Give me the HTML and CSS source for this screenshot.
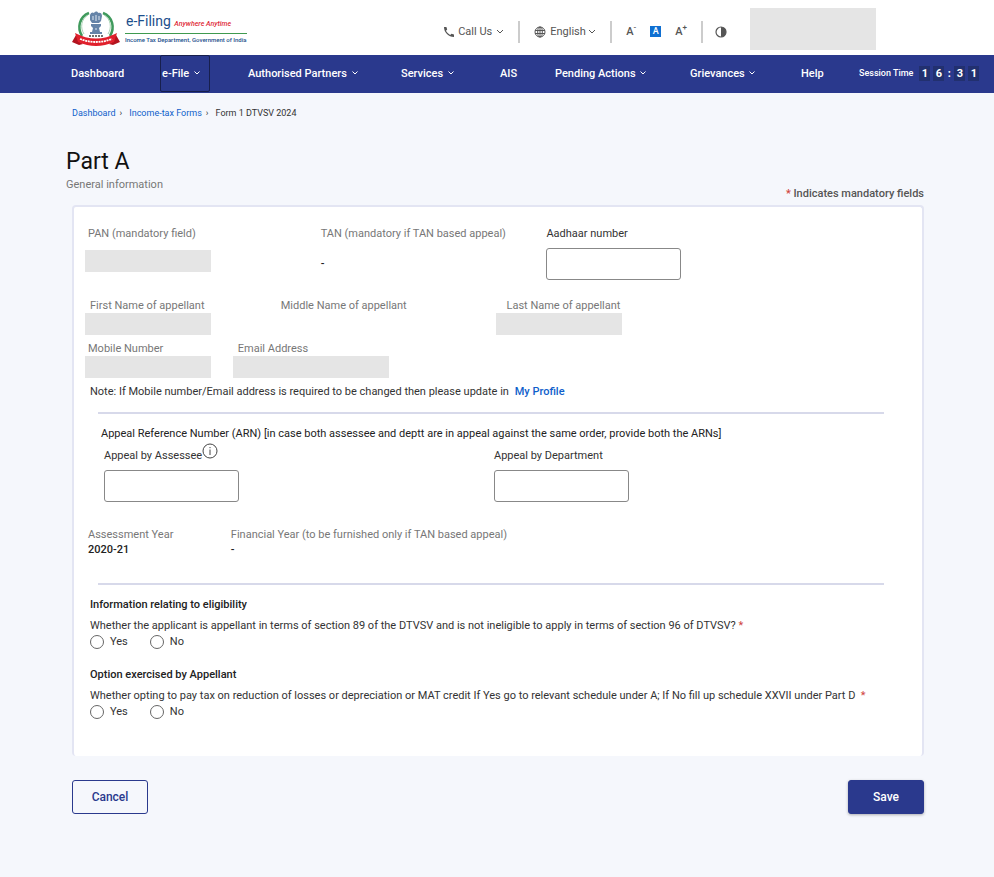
FILE: index.html
```html
<!DOCTYPE html>
<html lang="en">
<head>
    <meta charset="UTF-8">
    <meta name="viewport" content="width=device-width, initial-scale=1.0">
    <title>Form 1 DTVSV 2024 - Part A</title>
    <link rel="stylesheet" href="styles.css">
</head>
<body>
<header class="header">
    <a href="#" class="logo">
        <svg class="emblem" width="50" height="37" viewBox="0 0 50 37">
            <path d="M18 3C8 7 6 18 11 26" fill="none" stroke="#3f9a5c" stroke-width="2.500"/>
            <path d="M32 3c10 4 12 15 7 23" fill="none" stroke="#3f9a5c" stroke-width="2.500"/>
            <path d="M17 5C10 9 9 18 13 24M33 5c7 4 8 13 4 19" fill="none" stroke="#a9d3b4" stroke-width="1"/>
            <path d="M19 5c1-3 3-3 4-2 1-2 4-2 4 0 2-1 4 0 4 3l-1 5-2 2h-7l-2-3z" fill="#6684a8"/>
            <path d="M20 14h10v2l-2 2 1 4h2v2H19v-2h2l1-4-2-2z" fill="#6684a8"/>
            <path d="M22 6v4M25 5v6M28 6v4M24 19h2" stroke="#dfe8f2" stroke-width="1"/>
            <path d="M18 26h14" stroke="#444" stroke-width="1.500" stroke-dasharray="2 1"/>
            <path d="M1 32l4-7 5 1-1 6 3 2-4 1zM49 32l-4-7-5 1 1 6-3 2 4 1z" fill="#b3141f"/>
            <path d="M4 23q21 11 42 0l-3 9q-18 8-36 0z" fill="#e0202c"/>
            <path d="M9 29q16 6 32 0" fill="none" stroke="#fff" stroke-width="1.800" stroke-dasharray="2 .7"/>
        </svg>
        <span class="logo-text">
            <span class="logo-name">e-Filing <em>Anywhere Anytime</em></span>
            <span class="logo-dept">Income Tax Department, Government of India</span>
        </span>
    </a>
    <div class="header-right">
        <div class="tools">
            <button type="button" class="tool call">
                <svg width="12" height="12" viewBox="0 0 12 12"><path d="M1 1h2.400l.8 2.600-1.200 1.200c.8 1.700 2.300 3.200 4.200 4.200l1.200-1.200 2.600.8V11C5.500 11 1 6.500 1 1z" fill="#555"/></svg>
                Call Us
                <svg class="chevron" width="8" height="5" viewBox="0 0 8 5"><path d="M1 1l3 3 3-3"/></svg>
            </button>
            <span class="divider"></span>
            <label class="tool language">
                <svg width="12" height="12" viewBox="0 0 12 12" fill="none" stroke="#555" stroke-width="1"><circle cx="6" cy="6" r="5"/><ellipse cx="6" cy="6" rx="2.300" ry="5"/><path d="M1 4.500h10M1 7.500h10M6 1v10"/></svg>
                <select aria-label="Language">
                    <option>English</option>
                </select>
                <svg class="chevron" width="8" height="5" viewBox="0 0 8 5"><path d="M1 1l3 3 3-3"/></svg>
            </label>
            <span class="divider"></span>
            <div class="font-size">
                <button type="button" class="tool">A<sup>-</sup></button>
                <button type="button" class="tool active">A</button>
                <button type="button" class="tool">A<sup>+</sup></button>
            </div>
            <span class="divider"></span>
            <button type="button" class="tool contrast" aria-label="Contrast">
                <svg width="12" height="12" viewBox="0 0 12 12"><circle cx="6" cy="6" r="5" fill="#fff" stroke="#555" stroke-width="1.200"/><path d="M6 1a5 5 0 0 1 0 10z" fill="#555"/></svg>
            </button>
        </div>
        <div class="profile"></div>
    </div>
</header>

<nav class="nav">
    <a href="#">Dashboard</a>
    <a href="#" class="selected">e-File <svg class="chevron" width="6" height="4" viewBox="0 0 6 4"><path d="M.5.5L3 3 5.500.5"/></svg></a>
    <a href="#">Authorised Partners <svg class="chevron" width="6" height="4" viewBox="0 0 6 4"><path d="M.5.5L3 3 5.500.5"/></svg></a>
    <a href="#">Services <svg class="chevron" width="6" height="4" viewBox="0 0 6 4"><path d="M.5.5L3 3 5.500.5"/></svg></a>
    <a href="#">AIS</a>
    <a href="#">Pending Actions <svg class="chevron" width="6" height="4" viewBox="0 0 6 4"><path d="M.5.5L3 3 5.500.5"/></svg></a>
    <a href="#">Grievances <svg class="chevron" width="6" height="4" viewBox="0 0 6 4"><path d="M.5.5L3 3 5.500.5"/></svg></a>
    <a href="#">Help</a>
    <div class="session">
        <span class="session-label">Session Time</span>
        <b>1</b><b>6</b><i>:</i><b>3</b><b>1</b>
    </div>
</nav>

<main class="main">
    <div class="breadcrumb">
        <a href="#">Dashboard</a>
        <span class="sep">›</span>
        <a href="#">Income-tax Forms</a>
        <span class="sep">›</span>
        <span>Form 1 DTVSV 2024</span>
    </div>

    <h1>Part A</h1>
    <div class="subtitle">General information</div>
    <div class="mandatory"><span class="star">*</span> Indicates mandatory fields</div>

    <form>
        <div class="card">
            <div class="row row-pan">
                <div class="field">
                    <span class="label">PAN (mandatory field)</span>
                    <div class="masked"></div>
                </div>
                <div class="field">
                    <span class="label">TAN (mandatory if TAN based appeal)</span>
                    <span class="value">-</span>
                </div>
                <div class="field">
                    <label for="aadhaar">Aadhaar number</label>
                    <input type="text" id="aadhaar">
                </div>
            </div>
            <div class="row row-name">
                <div class="field">
                    <span class="label">First Name of appellant</span>
                    <div class="masked"></div>
                </div>
                <div class="field">
                    <span class="label">Middle Name of appellant</span>
                </div>
                <div class="field last-name">
                    <span class="label">Last Name of appellant</span>
                    <div class="masked"></div>
                </div>
            </div>
            <div class="row row-contact">
                <div class="field">
                    <span class="label">Mobile Number</span>
                    <div class="masked"></div>
                </div>
                <div class="field email">
                    <span class="label">Email Address</span>
                    <div class="masked wide"></div>
                </div>
            </div>
            <p class="note">Note: If Mobile number/Email address is required to be changed then please update in <a href="#">My Profile</a></p>

            <hr>

            <h2 class="arn-title">Appeal Reference Number (ARN) [in case both assessee and deptt are in appeal against the same order, provide both the ARNs]</h2>
            <div class="row row-arn">
                <div class="field">
                    <label for="assessee">Appeal by Assessee
                        <svg class="info" width="16" height="16" viewBox="0 0 16 16"><circle cx="8" cy="8" r="7" fill="none" stroke="#444"/><path d="M8 6.500V12M8 4v1.200" stroke="#444"/></svg>
                    </label>
                    <input type="text" id="assessee">
                </div>
                <div class="field">
                    <label for="department">Appeal by Department</label>
                    <input type="text" id="department">
                </div>
            </div>
            <div class="row row-year">
                <div class="field">
                    <span class="label">Assessment Year</span>
                    <span class="value">2020-21</span>
                </div>
                <div class="field">
                    <span class="label">Financial Year (to be furnished only if TAN based appeal)</span>
                    <span class="value">-</span>
                </div>
            </div>

            <hr>

            <div class="question">
                <h2>Information relating to eligibility</h2>
                <p>Whether the applicant is appellant in terms of section 89 of the DTVSV and is not ineligible to apply in terms of section 96 of DTVSV? <span class="star">*</span></p>
                <div class="options">
                    <label><input type="radio" name="eligible"> Yes</label>
                    <label><input type="radio" name="eligible"> No</label>
                </div>
            </div>
            <div class="question">
                <h2>Option exercised by Appellant</h2>
                <p>Whether opting to pay tax on reduction of losses or depreciation or MAT credit If Yes go to relevant schedule under A; If No fill up schedule XXVII under Part D &nbsp;<span class="star">*</span></p>
                <div class="options">
                    <label><input type="radio" name="option"> Yes</label>
                    <label><input type="radio" name="option"> No</label>
                </div>
            </div>
        </div>

        <div class="actions">
            <button type="button" class="btn btn-cancel">Cancel</button>
            <button type="submit" class="btn btn-save">Save</button>
        </div>
    </form>
</main>
</body>
</html>
```

FILE: styles.css
```css
* {
    box-sizing: border-box;
}
body {
    margin: 0;
    background: #f5f7fc;
    color: #333;
    font-family: Roboto, Arial, sans-serif;
    font-size: 11px;
    line-height: 15px;
}
h1, h2, p {
    margin: 0;
}
a {
    color: #0f5fcb;
    text-decoration: none;
}
button, input, select {
    font-family: inherit;
}
.chevron {
    fill: none;
    stroke: currentColor;
}
.star {
    color: #d0443e;
}

/* header */
.header {
    display: flex;
    align-items: center;
    justify-content: space-between;
    height: 55px;
    padding: 2px 118px 0 71px;
    background: #fff;
}
.logo {
    display: flex;
    align-items: center;
    gap: 4px;
}
.logo-text {
    display: flex;
    flex-direction: column;
    color: #1c4f8c;
    white-space: nowrap;
}
.logo-name {
    padding-left: 1px;
    border-bottom: 1px solid #3f9a4f;
    font-size: 14px;
    line-height: 18px;
}
.logo-name em {
    color: #e02a35;
    font-size: 7px;
    font-weight: 500;
}
.logo-dept {
    font-size: 6px;
    font-weight: 500;
    line-height: 11px;
}
.header-right {
    display: flex;
    align-items: flex-end;
}
.tools {
    display: flex;
    align-items: center;
    margin-bottom: 7px;
}
.tool {
    display: flex;
    align-items: center;
    gap: 4px;
    padding: 0;
    border: none;
    background: none;
    color: #555;
    font-size: 11px;
    line-height: 15px;
    cursor: pointer;
}
.tool .chevron {
    margin-left: 1px;
}
.language select {
    padding: 0;
    border: none;
    background: none;
    appearance: none;
    color: #555;
    font-size: 11px;
}
.language .chevron {
    margin-left: -2px;
}
.call {
    gap: 3px;
}
.divider {
    width: 2px;
    height: 22px;
    margin: 0 14px;
    background: #ccc;
}
.divider:nth-of-type(3) {
    margin-right: 12px;
}
.font-size {
    display: flex;
    align-items: center;
    gap: 14px;
}
.font-size .tool {
    gap: 0;
    font-weight: 500;
}
.font-size sup {
    font-size: 8px;
    line-height: 8px;
    align-self: flex-start;
}
.font-size .active {
    justify-content: center;
    width: 11px;
    height: 11px;
    background: #0f6fd1;
    color: #fff;
    font-size: 9px;
}
.contrast {
    margin-right: 23px;
}
.profile {
    width: 126px;
    height: 42px;
    background: #e5e5e5;
}

/* main menu */
.nav {
    display: grid;
    grid-template-columns: 89fr 88fr 153fr 99fr 55fr 135fr 111fr 58fr 135fr;
    align-items: center;
    height: 38px;
    padding: 0 0 3px 71px;
    background: #2a398d;
}
.nav a {
    color: #fff;
    font-weight: 500;
    white-space: nowrap;
}
.nav .chevron {
    margin: 0 0 2px 2px;
}
.nav .selected {
    justify-self: start;
    padding: 10px 9px 10px 1px;
    border: 1px solid #171f4d;
    border-radius: 2px;
}
.session {
    display: flex;
    align-items: center;
    gap: 3px;
    color: #fff;
}
.session-label {
    margin-right: 3px;
    font-size: 9px;
    font-weight: 500;
    white-space: nowrap;
}
.session b, .session i {
    width: 11px;
    background: #22306f;
    font-style: normal;
    font-weight: 700;
    text-align: center;
}
.session i {
    width: 4px;
    background: none;
}

/* page */
.main {
    padding: 13px 70px 40px 66px;
}
.breadcrumb {
    display: flex;
    gap: 4px;
    margin-left: 6px;
    font-size: 9px;
}
.sep {
    margin-right: 3px;
}
h1 {
    margin-top: 25px;
    color: #111;
    font-size: 23px;
    font-weight: 400;
    line-height: 31px;
}
.subtitle {
    color: #777;
}
.mandatory {
    margin-top: -6px;
    color: #555;
    font-weight: 500;
    text-align: right;
}
.card {
    margin: 4px 0 0 6px;
    padding: 19px 38px 37px 11px;
    border: 2px solid #e3e5f3;
    border-bottom: none;
    border-radius: 4px;
    background: #fff;
}
.row {
    display: grid;
}
.row-pan {
    grid-template-columns: 233fr 226fr 341fr;
}
.row-name {
    grid-template-columns: 191fr 221fr 388fr;
    margin-top: 18px;
}
.row-contact {
    grid-template-columns: 148fr 652fr;
    margin-top: 6px;
}
.row-arn {
    grid-template-columns: 390fr 390fr;
    margin: 7px 0 0 19px;
}
.row-year {
    grid-template-columns: 143fr 657fr;
    margin-top: 25px;
}
.field {
    display: flex;
    flex-direction: column;
    align-items: flex-start;
}
.label, .value {
    padding-left: 3px;
}
.label {
    color: #777;
}
.value {
    color: #222;
    font-weight: 500;
}
.row-pan .label, .row-pan label, .row-arn label {
    margin-bottom: 7px;
}
.row-pan label {
    padding-left: 3px;
}
.row-pan input {
    margin-left: 3px;
}
.row-pan .masked {
    margin-top: 2px;
}
.row-pan .value {
    margin-top: 8px;
}
.row-name .label {
    padding-left: 5px;
}
.last-name .label {
    padding-left: 10px;
}
.email .label {
    padding-left: 5px;
}
.masked {
    width: 126px;
    height: 22px;
    background: #e5e5e5;
}
.masked.wide {
    width: 156px;
}
.field label {
    position: relative;
    color: #333;
}
.field input {
    width: 135px;
    height: 32px;
    padding: 0 8px;
    border: 1px solid #888;
    border-radius: 3px;
    background: #fff;
}
.info {
    position: absolute;
    top: -5px;
    left: 100%;
}
.note {
    margin: 6px 0 0 5px;
}
.note a {
    margin-left: 3px;
    font-weight: 500;
}
hr {
    height: 2px;
    margin: 13px 0 12px 13px;
    border: none;
    background: #d7d9ea;
}
.row-year + hr {
    margin-top: 26px;
}
h2 {
    color: #222;
    font-size: 11px;
    font-weight: 500;
    line-height: 15px;
}
.arn-title {
    margin-left: 16px;
    font-weight: 400;
}
.question {
    margin-left: 5px;
}
.question + .question {
    margin-top: 18px;
}
.question p {
    margin-top: 6px;
}
.options {
    display: flex;
    gap: 22px;
    margin-top: 2px;
}
.options label {
    display: flex;
    gap: 6px;
    height: 14px;
    line-height: 13px;
}
.options input {
    width: 14px;
    height: 14px;
    margin: 0;
    border: 1px solid #666;
    border-radius: 50%;
    appearance: none;
}
.options input:checked {
    background: radial-gradient(#2a398d 4px, #fff 5px);
}

.actions {
    display: flex;
    justify-content: space-between;
    margin: 24px 0 0 6px;
}
.btn {
    width: 76px;
    height: 34px;
    border: 1px solid #2a398d;
    border-radius: 3px;
    font-size: 12px;
    font-weight: 500;
    cursor: pointer;
}
.btn-cancel {
    background: none;
    color: #2a398d;
}
.btn-save {
    background: #2a398d;
    color: #fff;
    box-shadow: 0 1px 3px rgba(0, 0, 0, 0.3);
}
```
